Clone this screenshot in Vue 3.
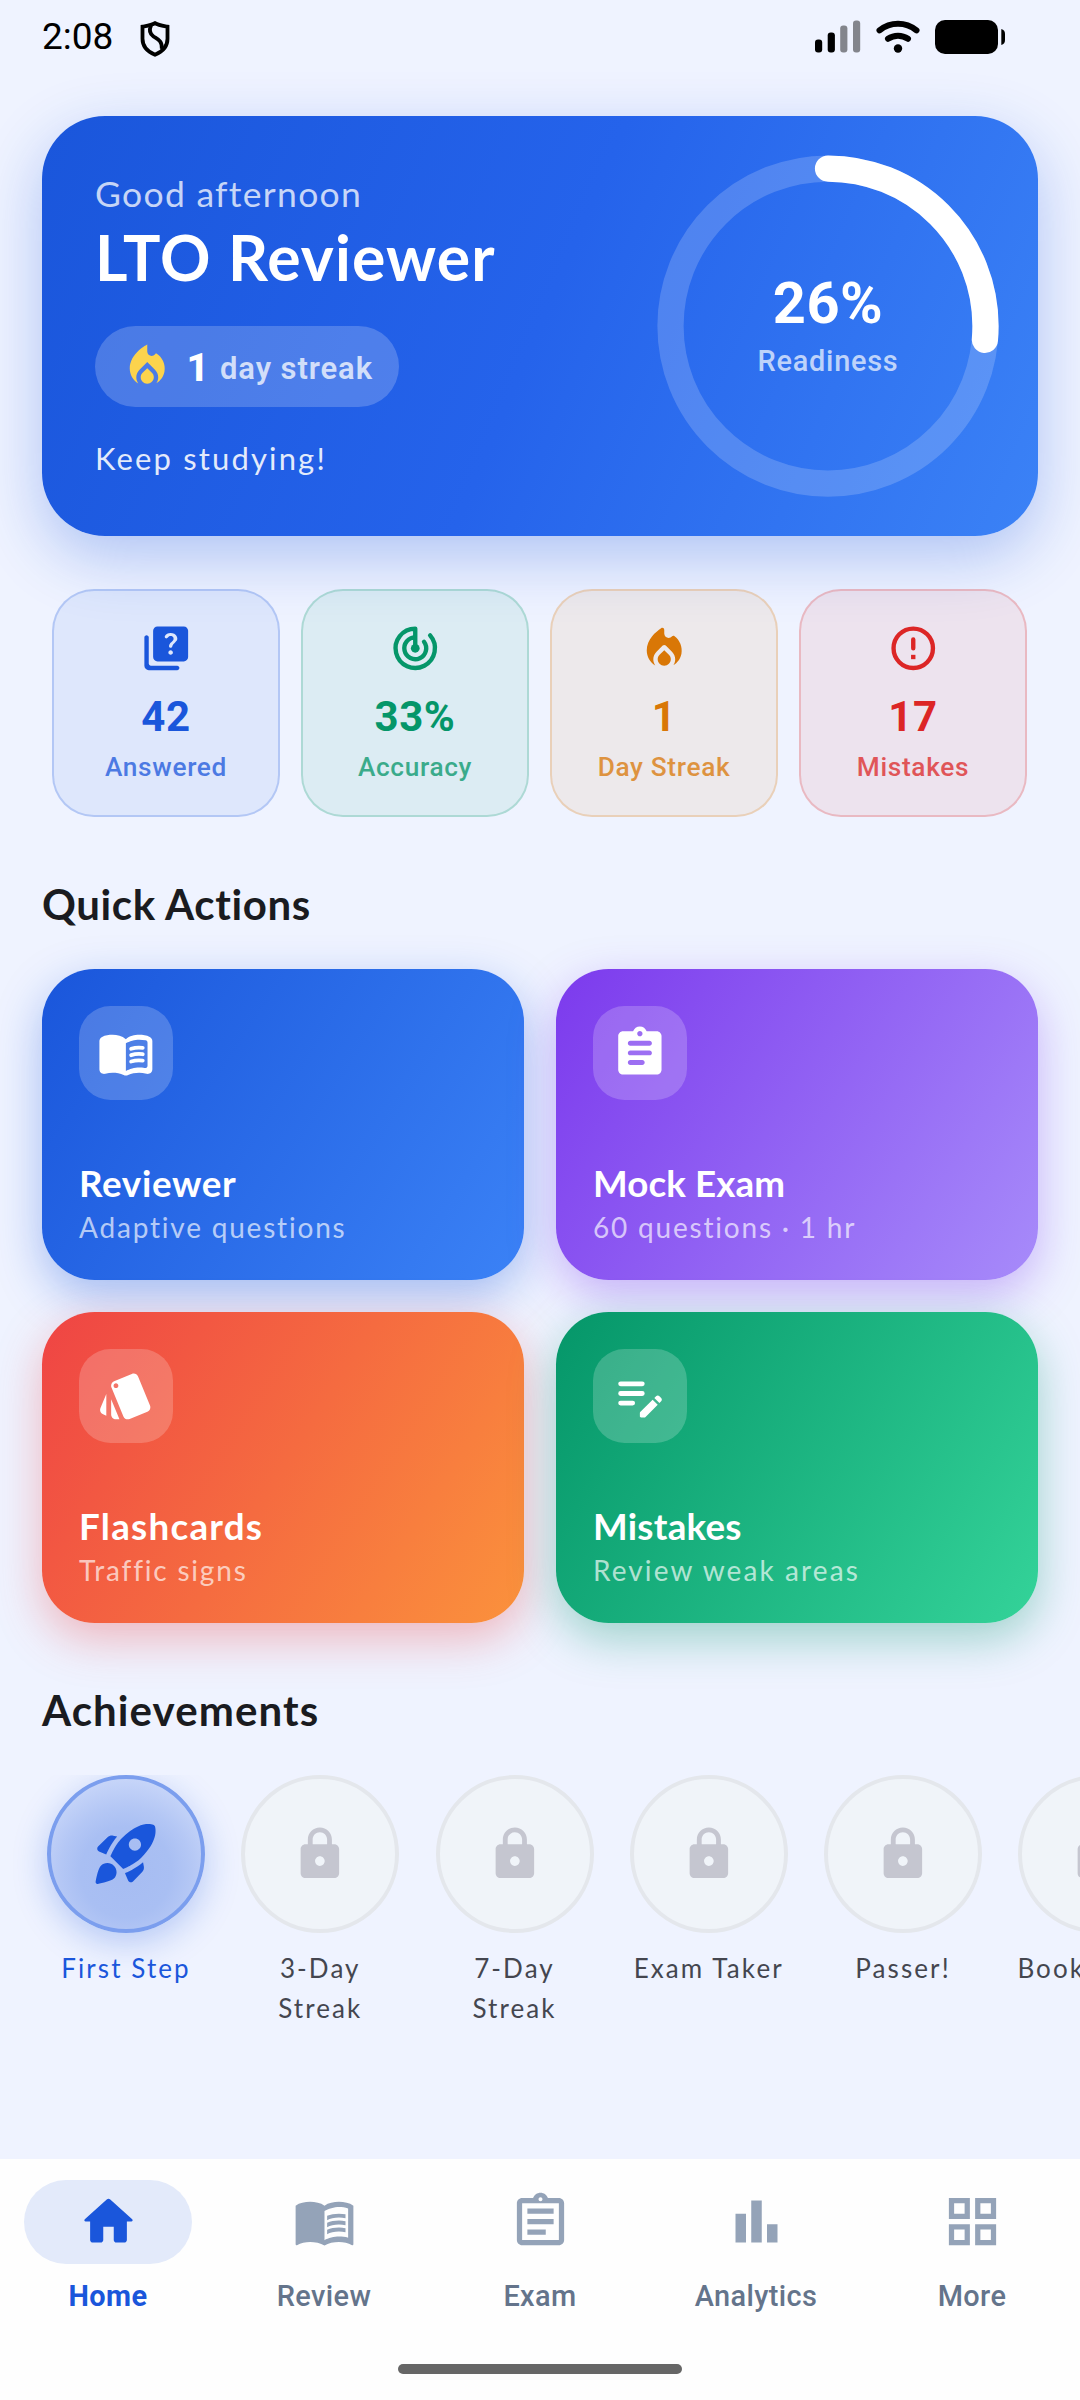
<template>
  <div class="screen">
    <!-- Status bar -->
    <header class="status-bar">
      <div class="status-left">
        <span class="clock">2:08</span>
        <svg class="shield" viewBox="0 0 30 36">
          <path d="M15 2.200c3.600 2.300 7.800 2.700 12.500 3.500v12c0 7.500-5 13-12.500 16C7.500 30.700 2.500 25.200 2.500 17.700v-12C7.200 4.900 11.400 4.500 15 2.200z" />
          <path d="M11 4.500c-2 4.500-1 8.500 2.500 11s9 4 8.300 12.500" />
        </svg>
      </div>
      <div class="status-right">
        <svg class="signal" viewBox="0 0 46 34">
          <rect x="0" y="19.500" width="7.200" height="13" rx="3" />
          <rect x="12.700" y="12.500" width="7.200" height="20" rx="3" />
          <rect x="25.200" y="5.500" width="7.200" height="27" rx="3" opacity="0.45" />
          <rect x="38" y="0.500" width="7.200" height="32" rx="3" opacity="0.45" />
        </svg>
        <svg class="wifi" viewBox="0 0 44 34">
          <path d="M3.500 10.300c11-8.800 26-8.800 37 0" />
          <path d="M12 18.800c6-4.200 14-4.200 20 0" />
          <circle cx="22" cy="28.500" r="4.200" />
        </svg>
        <svg class="battery" viewBox="0 0 71 34">
          <rect x="0" y="0" width="63" height="34" rx="10" />
          <path d="M66.300 9c2.600.6 3.700 2.500 3.700 5v6c0 2.500-1.100 4.400-3.700 5z" />
        </svg>
      </div>
    </header>

    <main class="content">
      <!-- Readiness card -->
      <section class="hero">
        <div class="hero-text">
          <p class="greeting">Good afternoon</p>
          <h1 class="app-name">LTO Reviewer</h1>
          <div class="streak-pill">
            <Glyph class="streak-icon" name="fire" />
            <span class="streak-count">1</span>
            <span class="streak-label">day streak</span>
          </div>
          <p class="hint">Keep studying!</p>
        </div>
        <div class="ring">
          <svg class="ring-svg" viewBox="0 0 342 342">
            <circle class="ring-track" cx="171" cy="171" r="157.500" />
            <circle
              class="ring-value"
              cx="171"
              cy="171"
              r="157.500"
              :stroke-dasharray="`${ringLength * progress} ${ringLength}`"
              transform="rotate(-90 171 171)"
            />
          </svg>
          <div class="ring-text">
            <span class="ring-percent">26%</span>
            <span class="ring-label">Readiness</span>
          </div>
        </div>
      </section>

      <!-- Stats -->
      <section class="stats">
        <div v-for="stat in stats" :key="stat.label" class="stat" :class="stat.tone">
          <Glyph class="stat-icon" :name="stat.icon" />
          <span class="stat-value">{{ stat.value }}</span>
          <span class="stat-label">{{ stat.label }}</span>
        </div>
      </section>

      <h2 class="section-title quick-title">Quick Actions</h2>
      <section class="actions">
        <div v-for="action in actions" :key="action.title" class="action" :class="action.tone">
          <div class="action-tile">
            <Glyph class="action-icon" :name="action.icon" />
          </div>
          <span class="action-title">{{ action.title }}</span>
          <span class="action-subtitle">{{ action.subtitle }}</span>
        </div>
      </section>

      <h2 class="section-title achievements-title">Achievements</h2>
      <section class="badges">
        <div v-for="badge in badges" :key="badge.label" class="badge" :class="{ earned: badge.earned }">
          <div class="badge-circle">
            <Glyph class="badge-icon" :name="badge.earned ? 'rocket' : 'lock'" />
          </div>
          <span class="badge-label">{{ badge.label }}</span>
        </div>
      </section>
    </main>

    <!-- Bottom navigation -->
    <nav class="nav">
      <div class="nav-items">
        <div v-for="tab in tabs" :key="tab.label" class="nav-item" :class="{ active: tab.label === current }">
          <div class="nav-indicator">
            <Glyph class="nav-icon" :name="tab.icon" />
          </div>
          <span class="nav-label">{{ tab.label }}</span>
        </div>
      </div>
      <div class="gesture-bar"></div>
    </nav>
  </div>
</template>

<script setup>
import { ref, h } from 'vue'

// fill: solid shapes, line: 2-unit rounded strokes, thin: 1.6-unit rounded strokes
const icons = {
  fire: {
    fill: 'M12 12.900l-2.130 2.090C9.310 15.550 9 16.280 9 17.060 9 18.680 10.350 20 12 20s3-1.320 3-2.940c0-.78-.31-1.520-.87-2.070L12 12.900zM16 6l-.44.55C14.380 8.020 12 7.190 12 5.300V2S4 6 4 13c0 2.920 1.560 5.470 3.890 6.860-.56-.79-.89-1.760-.89-2.800 0-1.320.52-2.560 1.470-3.500L12 10.100l3.530 3.470c.95.93 1.470 2.170 1.470 3.500 0 1.020-.31 1.960-.85 2.750 1.890-1.150 3.290-3.060 3.710-5.300.66-3.550-1.070-6.900-3.860-8.520z'
  },
  fireRound: {
    fill: 'M12 12.900l-2.130 2.090C9.310 15.550 9 16.280 9 17.060 9 18.680 10.350 20 12 20s3-1.320 3-2.940c0-.78-.31-1.520-.87-2.070L12 12.900zM15.560 6.550C14.380 8.020 12 7.190 12 5.300V3.600c0-.8-.8-1.200-1.440-.75C8.200 4.500 4 7.800 4 13c0 2.920 1.560 5.470 3.890 6.860-.56-.79-.89-1.760-.89-2.800 0-1.320.52-2.560 1.470-3.500l2.830-2.780c.39-.38 1.010-.38 1.400 0l2.830 2.790c.95.93 1.470 2.170 1.470 3.500 0 1.020-.31 1.960-.85 2.750 1.890-1.150 3.290-3.060 3.710-5.300.6-3.230-.8-6.300-3.130-8.050-.38-.28-.87-.27-1.170.08z'
  },
  quiz: {
    fill: 'M3 6c-.55 0-1 .45-1 1v13c0 1.100.9 2 2 2h13c.55 0 1-.45 1-1s-.45-1-1-1H5c-.55 0-1-.45-1-1V7c0-.55-.45-1-1-1zM20 2H8c-1.100 0-2 .9-2 2v12c0 1.100.9 2 2 2h12c1.100 0 2-.9 2-2V4c0-1.100-.9-2-2-2zm-5.990 13c-.59 0-1.050-.47-1.050-1.050 0-.59.47-1.040 1.050-1.040.59 0 1.040.45 1.040 1.040-.01.58-.45 1.050-1.040 1.050zm2.500-6.170c-.63.93-1.230 1.210-1.560 1.810-.08.14-.13.26-.16.49-.05.39-.36.68-.75.68h-.03c-.44 0-.79-.38-.75-.82.03-.28.09-.57.25-.84.41-.73 1.180-1.160 1.630-1.800.48-.68.21-1.940-1.140-1.940-.61 0-1.010.32-1.240.7-.19.34-.59.47-.96.32-.42-.18-.62-.67-.41-1.060C11.850 5.510 12.730 5 13.990 5c1.330 0 2.250.61 2.710 1.370.4.65.63 1.870-.19 2.460z'
  },
  target: {
    fill: 'M12 10a2 2 0 1 0 0 4a2 2 0 1 0 0-4z',
    line: 'M12 12V3a9 9 0 1 0 6.800 3.100M12 7a5 5 0 1 0 4 2'
  },
  alert: {
    fill: 'M11 15h2v2h-2z',
    line: 'M12 3a9 9 0 1 0 0 18a9 9 0 1 0 0-18zM12 8v4'
  },
  reviewer: {
    fill: 'M12 6.300C10.400 4.900 8.400 4.500 6.500 4.500c-1.500 0-3.100.2-4.400.9C1.400 5.800 1 6.400 1 7.100v11.700c0 1.300 1.200 2.200 2.450 1.900C4.450 20.400 5.500 20.300 6.500 20.300c1.560 0 3.200.26 4.560.92.6.3 1.280.3 1.870 0 1.360-.65 3-.92 4.560-.92 1 0 2.050.1 3.050.4 1.250.3 2.460-.6 2.460-1.900V7.100c0-.7-.4-1.400-1.100-1.700-1.300-.7-2.900-.9-4.400-.9-1.900 0-4 .4-5.500 1.800zM21 17.300c0 .6-.58 1.070-1.200.96-.75-.14-1.540-.2-2.300-.2-1.700 0-4.150.65-5.500 1.500V8c1.350-.85 3.800-1.500 5.500-1.500.92 0 1.830.09 2.700.28.46.1.8.51.8.98z',
    thin: 'M14.200 10.300c1.500-.5 3.300-.6 4.800-.4M14.200 12.950c1.500-.5 3.300-.6 4.800-.4M14.200 15.600c1.500-.5 3.300-.6 4.800-.4'
  },
  exam: {
    fill: 'M19 3h-4.180C14.400 1.840 13.300 1 12 1s-2.400.84-2.820 2H5c-1.100 0-2 .9-2 2v14c0 1.100.9 2 2 2h14c1.100 0 2-.9 2-2V5c0-1.100-.9-2-2-2zm-7-.1c.6 0 1.100.5 1.100 1.100s-.5 1.100-1.100 1.100-1.100-.5-1.100-1.100.5-1.100 1.100-1.100zM13 17H8c-.55 0-1-.45-1-1s.45-1 1-1h5c.55 0 1 .45 1 1s-.45 1-1 1zm3-4H8c-.55 0-1-.45-1-1s.45-1 1-1h8c.55 0 1 .45 1 1s-.45 1-1 1zm0-4H8c-.55 0-1-.45-1-1s.45-1 1-1h8c.55 0 1 .45 1 1s-.45 1-1 1z'
  },
  cards: {
    fill: 'M2.530 19.650l1.340.56v-9.030l-2.430 5.860c-.41 1.020.08 2.190 1.090 2.610zm19.500-3.700L17.070 3.980c-.31-.75-1.040-1.210-1.810-1.230-.26 0-.53.04-.79.15L7.100 5.950c-.75.31-1.210 1.030-1.230 1.800-.01.27.04.54.15.8l4.960 11.970c.31.76 1.050 1.220 1.830 1.230.26 0 .52-.05.77-.15l7.360-3.050c1.020-.42 1.510-1.590 1.090-2.600zM7.880 8.750c-.55 0-1-.45-1-1s.45-1 1-1 1 .45 1 1-.45 1-1 1zm-2 11c0 1.100.9 2 2 2h1.450l-3.450-8.340v6.340z'
  },
  note: {
    fill: 'M18.010 12.870l.71-.71c.39-.39 1.020-.39 1.410 0l.71.71c.39.39.39 1.020 0 1.410l-.71.71-2.120-2.120zM17.300 13.580l-5.160 5.160c-.09.09-.14.21-.14.35v1.410c0 .28.22.5.5.5h1.410c.13 0 .26-.05.35-.15l5.160-5.160-2.120-2.110z',
    line: 'M4 7h9M4 11h9M4 15h5'
  },
  rocket: {
    fill: 'M9.190 6.350c-2.040 2.290-3.440 5.580-3.570 5.890L3.270 11.230c-.64-.27-.8-1.100-.31-1.590L6.050 6.640c.47-.47 1.150-.68 1.810-.55l1.330.26zM11.170 17s3.740-1.550 5.890-3.700c5.400-5.400 4.800-9 4.500-10.200-.08-.3-.3-.53-.6-.6-1.200-.3-4.860-.96-10.260 4.440C8.550 9.090 7 12.830 7 12.830L11.170 17zm6.480-2.190c-2.290 2.040-5.580 3.440-5.890 3.570l1.010 2.350c.27.64 1.100.8 1.590.31l3-3.090c.47-.47.68-1.150.55-1.810l-.26-1.330zM9 18c0 .83-.34 1.580-.88 2.120-.85.85-3.800 1.450-5.260 1.730-.41.08-.78-.29-.7-.7.26-1.460.87-4.420 1.720-5.270C4.420 15.340 5.170 15 6 15c1.660 0 3 1.340 3 3zm4-9c0-1.100.9-2 2-2s2 .9 2 2-.9 2-2 2-2-.9-2-2z'
  },
  lock: {
    fill: 'M18 8h-1V6c0-2.760-2.240-5-5-5S7 3.240 7 6v2H6c-1.100 0-2 .9-2 2v10c0 1.100.9 2 2 2h12c1.100 0 2-.9 2-2V10c0-1.100-.9-2-2-2zm-6 9c-1.100 0-2-.9-2-2s.9-2 2-2 2 .9 2 2-.9 2-2 2zM9 8V6c0-1.660 1.340-3 3-3s3 1.340 3 3v2H9z'
  },
  home: {
    fill: 'M10 19v-5h4v5c0 .55.45 1 1 1h3c.55 0 1-.45 1-1v-7h1.700c.46 0 .68-.57.33-.87L12.670 3.600c-.38-.34-.96-.34-1.340 0l-8.360 7.530c-.34.3-.13.87.33.87H5v7c0 .55.45 1 1 1h3c.55 0 1-.45 1-1z'
  },
  book: {
    fill: 'M12 6C10.550 4.900 8.450 4.500 6.500 4.500S2.450 4.900 1 6v14.700c0 .3.300.4.500.3 1.500-.8 3.200-1.200 5-1.200s4 .4 5.500 1.300c1.500-.9 3.500-1.300 5.500-1.300 1.800 0 3.500.4 5 1.200.2.100.5 0 .5-.3V6c-1.450-1.100-3.550-1.500-5.500-1.500S13.450 4.900 12 6zm9 12.200c-1.100-.35-2.300-.45-3.500-.45-1.700 0-4.150.55-5.500 1.400V8c1.350-.85 3.800-1.500 5.500-1.500 1.200 0 2.400.15 3.500.5zM17.500 10.500c.88 0 1.730.09 2.500.26V9.240c-.79-.15-1.640-.24-2.500-.24-1.700 0-3.240.29-4.500.83v1.660c1.130-.64 2.700-.99 4.500-.99zM13 12.490v1.660c1.130-.64 2.700-.99 4.500-.99.88 0 1.730.09 2.500.26V11.900c-.79-.15-1.640-.24-2.500-.24-1.700 0-3.240.3-4.500.83zM17.500 14.330c-1.700 0-3.240.29-4.500.83v1.660c1.130-.64 2.700-.99 4.500-.99.88 0 1.730.09 2.500.26v-1.520c-.79-.16-1.640-.24-2.500-.24z'
  },
  clipboard: {
    fill: 'M7 15h7v2H7zm0-4h10v2H7zm0-4h10v2H7zm12-4h-4.180C14.400 1.840 13.300 1 12 1s-2.400.84-2.820 2H5c-1.100 0-2 .9-2 2v14c0 1.100.9 2 2 2h14c1.100 0 2-.9 2-2V5c0-1.100-.9-2-2-2zm-7-.25c.41 0 .75.34.75.75s-.34.75-.75.75-.75-.34-.75-.75.34-.75.75-.75zM19 19H5V5h14v14z'
  },
  chart: {
    fill: 'M4 9h4v11H4zM10 4h4v16h-4zM16 13h4v7h-4z'
  },
  grid: {
    fill: 'M3 3v8h8V3H3zm6 6H5V5h4v4zm-6 4v8h8v-8H3zm6 6H5v-4h4v4zm4-16v8h8V3h-8zm6 6h-4V5h4v4zm-6 4v8h8v-8h-8zm6 6h-4v-4h4v4z'
  }
}

const strokeAttrs = { fill: 'none', stroke: 'currentColor', 'stroke-linecap': 'round', 'stroke-linejoin': 'round' }

const Glyph = (props) => {
  const icon = icons[props.name]
  return h('svg', { viewBox: '0 0 24 24' }, [
    h('path', { d: icon.fill, fill: 'currentColor', 'fill-rule': 'evenodd' }),
    icon.line && h('path', { d: icon.line, 'stroke-width': 2, ...strokeAttrs }),
    icon.thin && h('path', { d: icon.thin, 'stroke-width': 1.6, ...strokeAttrs })
  ])
}
Glyph.props = ['name']

const progress = ref(0.264)
const ringLength = 2 * Math.PI * 157.5

const stats = ref([
  { icon: 'quiz', value: '42', label: 'Answered', tone: 'blue' },
  { icon: 'target', value: '33%', label: 'Accuracy', tone: 'green' },
  { icon: 'fireRound', value: '1', label: 'Day Streak', tone: 'orange' },
  { icon: 'alert', value: '17', label: 'Mistakes', tone: 'red' }
])

const actions = ref([
  { icon: 'reviewer', title: 'Reviewer', subtitle: 'Adaptive questions', tone: 'ocean' },
  { icon: 'exam', title: 'Mock Exam', subtitle: '60 questions · 1 hr', tone: 'violet' },
  { icon: 'cards', title: 'Flashcards', subtitle: 'Traffic signs', tone: 'sunset' },
  { icon: 'note', title: 'Mistakes', subtitle: 'Review weak areas', tone: 'forest' }
])

const badges = ref([
  { label: 'First Step', earned: true },
  { label: '3-Day Streak' },
  { label: '7-Day Streak' },
  { label: 'Exam Taker' },
  { label: 'Passer!' },
  { label: 'Bookmarker' }
])

const current = ref('Home')
const tabs = [
  { icon: 'home', label: 'Home' },
  { icon: 'book', label: 'Review' },
  { icon: 'clipboard', label: 'Exam' },
  { icon: 'chart', label: 'Analytics' },
  { icon: 'grid', label: 'More' }
]
</script>

<style>
body {
  margin: 0;
  background: #eff3ff;
}
</style>

<style scoped>
.screen {
  width: 1080px;
  height: 2400px;
  display: flex;
  flex-direction: column;
  overflow: hidden;
  background: #eff3ff;
  font-family: Lato, "Open Sans", sans-serif;
  font-variant-ligatures: none;
}

svg {
  display: block;
  flex: none;
}

p, h1, h2 {
  margin: 0;
}

.status-bar {
  height: 74px;
  flex: none;
  box-sizing: border-box;
  padding: 0 74px 0 42px;
  display: flex;
  align-items: center;
  justify-content: space-between;
  color: #000;
}

.status-left, .status-right {
  display: flex;
  align-items: center;
}

.clock {
  width: 98px;
  font: 400 37px/42px Roboto, sans-serif;
}

.shield {
  width: 30px;
  height: 36px;
  margin-top: 3px;
  fill: none;
  stroke: #000;
  stroke-width: 3.8;
}

.signal {
  width: 46px;
  height: 34px;
}

.wifi {
  width: 44px;
  height: 34px;
  margin-left: 15px;
}

.wifi path {
  fill: none;
  stroke: #000;
  stroke-width: 6;
  stroke-linecap: round;
}

.battery {
  width: 71px;
  height: 34px;
  margin-left: 15px;
}

.content {
  flex: none;
  height: 2085px;
  padding-top: 42px;
  box-sizing: border-box;
}

.hero {
  height: 420px;
  margin: 0 42px;
  padding: 0 39px 0 53px;
  box-sizing: border-box;
  display: flex;
  justify-content: space-between;
  align-items: center;
  border-radius: 63px;
  background: linear-gradient(112.87deg, #1a56db, #2563eb 50%, #3b82f6);
  box-shadow: 0 21px 62px rgba(26, 86, 219, 0.3);
  color: #fff;
}

.hero-text {
  align-self: flex-start;
  padding-top: 52px;
  display: flex;
  flex-direction: column;
  align-items: flex-start;
  white-space: nowrap;
}

.greeting {
  font-size: 35.5px;
  line-height: 52px;
  font-weight: 400;
  letter-spacing: 1.3px;
  color: rgba(255, 255, 255, 0.75);
}

.app-name {
  font-size: 62.5px;
  line-height: 74px;
  font-weight: 700;
  letter-spacing: 1.1px;
}

.streak-pill {
  height: 81px;
  width: 304px;
  margin-top: 32px;
  padding-left: 26px;
  box-sizing: border-box;
  display: flex;
  align-items: center;
  border-radius: 41px;
  background: rgba(255, 255, 255, 0.2);
  font-family: Roboto, sans-serif;
}

.streak-icon {
  width: 52.5px;
  height: 52.5px;
  color: #fcd34d;
}

.streak-count {
  margin-left: 13px;
  font-size: 39px;
  line-height: 46px;
  margin-top: 2px;
  font-weight: 800;
}

.streak-label {
  margin-left: 11px;
  margin-top: 3px;
  font-size: 31px;
  font-weight: 600;
  letter-spacing: 0.9px;
  color: rgba(255, 255, 255, 0.75);
}

.hint {
  margin-top: 27px;
  font-size: 31px;
  line-height: 48px;
  letter-spacing: 2.150px;
  color: rgba(255, 255, 255, 0.88);
}

.ring {
  width: 342px;
  height: 342px;
  display: grid;
  place-items: center;
  font-family: Roboto, sans-serif;
}

.ring-svg, .ring-text {
  grid-area: 1 / 1;
}

.ring-svg {
  width: 342px;
  height: 342px;
}

.ring-track, .ring-value {
  fill: none;
  stroke-width: 26.25;
}

.ring-track {
  stroke: rgba(255, 255, 255, 0.18);
}

.ring-value {
  stroke: #fff;
  stroke-linecap: round;
}

.ring-text {
  display: flex;
  flex-direction: column;
  align-items: center;
}

.ring-percent {
  font-size: 57.75px;
  line-height: 66px;
  font-weight: 700;
  letter-spacing: 0.5px;
}

.ring-label {
  font-size: 28.9px;
  line-height: 42px;
  margin-top: 4px;
  font-weight: 500;
  letter-spacing: 0.75px;
  color: rgba(255, 255, 255, 0.7);
}

.stats {
  margin: 53px 53px 0 52px;
  display: grid;
  grid-template-columns: repeat(4, 1fr);
  gap: 21px;
  font-family: Roboto, sans-serif;
}

.stat {
  height: 228px;
  box-sizing: border-box;
  padding-top: 31px;
  display: flex;
  flex-direction: column;
  align-items: center;
  border: 2px solid;
  border-radius: 42px;
}

.stat.blue {
  color: #1a56db;
  background: rgba(26, 86, 219, 0.08);
  border-color: rgba(26, 86, 219, 0.22);
}

.stat.green {
  color: #059669;
  background: rgba(5, 150, 105, 0.08);
  border-color: rgba(5, 150, 105, 0.22);
}

.stat.orange {
  color: #d97706;
  background: rgba(217, 119, 6, 0.08);
  border-color: rgba(217, 119, 6, 0.22);
}

.stat.red {
  color: #dc2626;
  background: rgba(220, 38, 38, 0.08);
  border-color: rgba(220, 38, 38, 0.22);
}

.stat-icon {
  width: 52.5px;
  height: 52.5px;
}

.stat-value {
  margin-top: 16px;
  font-size: 42px;
  line-height: 52px;
  font-weight: 700;
  letter-spacing: 0.6px;
}

.stat-label {
  margin-top: 5px;
  font-size: 26.25px;
  line-height: 38px;
  font-weight: 500;
  letter-spacing: 0.65px;
  opacity: 0.75;
}

.section-title {
  margin: 0 42px;
  font-size: 42px;
  line-height: 60px;
  font-weight: 700;
  color: #1a1b20;
}

.quick-title {
  margin-top: 57px;
  letter-spacing: 0.6px;
}

.actions {
  margin: 35px 42px 0;
  display: grid;
  grid-template-columns: 1fr 1fr;
  gap: 32px;
}

.action {
  height: 311px;
  box-sizing: border-box;
  padding: 37px;
  display: flex;
  flex-direction: column;
  align-items: flex-start;
  border-radius: 52.5px;
  color: #fff;
}

.action.ocean {
  background: linear-gradient(122.8deg, #1a56db, #3b82f6);
  box-shadow: 0 16px 46px rgba(26, 86, 219, 0.35);
}

.action.violet {
  background: linear-gradient(122.8deg, #7c3aed, #a78bfa);
  box-shadow: 0 16px 46px rgba(124, 58, 237, 0.35);
}

.action.sunset {
  background: linear-gradient(122.8deg, #ef4444, #fb923c);
  box-shadow: 0 16px 46px rgba(239, 68, 68, 0.35);
}

.action.forest {
  background: linear-gradient(122.8deg, #059669, #34d399);
  box-shadow: 0 16px 46px rgba(5, 150, 105, 0.35);
}

.action-tile {
  flex: none;
  width: 94px;
  height: 94px;
  display: grid;
  place-items: center;
  border-radius: 31.5px;
  background: rgba(255, 255, 255, 0.2);
}

.action-icon {
  width: 57.75px;
  height: 57.75px;
}

.action-title {
  margin-top: 59px;
  font-size: 36.75px;
  line-height: 48px;
  font-weight: 700;
}

.ocean .action-title {
  letter-spacing: 0.65px;
}

.violet .action-title {
  letter-spacing: 0.1px;
}

.sunset .action-title {
  letter-spacing: 1.250px;
}

.forest .action-title {
  letter-spacing: 0.25px;
}

.action-subtitle {
  font-size: 28px;
  line-height: 40px;
  font-weight: 400;
  letter-spacing: 1.8px;
  color: rgba(255, 255, 255, 0.68);
}

.forest .action-subtitle {
  letter-spacing: 2.1px;
}

.achievements-title {
  margin-top: 57px;
  letter-spacing: 1.1px;
}

.badges {
  margin-top: 35px;
  padding-left: 42px;
  height: 270px;
  display: flex;
  gap: 26.25px;
  overflow: hidden;
}

.badge {
  width: 168px;
  flex: none;
  display: flex;
  flex-direction: column;
  align-items: center;
}

.badge-circle {
  width: 158px;
  height: 158px;
  box-sizing: border-box;
  display: grid;
  place-items: center;
  border: 4px solid #e4e7ec;
  border-radius: 50%;
  background: #f0f4f9;
  color: #c5c6d0;
}

.badge-icon {
  width: 57.75px;
  height: 57.75px;
}

.badge-label {
  max-width: 160px;
  margin-top: 15px;
  font-size: 26px;
  line-height: 40px;
  letter-spacing: 2.1px;
  text-align: center;
  color: #44464f;
}

.earned .badge-circle {
  border-color: #7b9eee;
  background: radial-gradient(circle at 50% 62%, #a6bcf2 0, #a9bff3 38%, #b4c7f5 55%, #c8d6f9 80%);
  box-shadow: 0 10px 34px rgba(26, 86, 219, 0.27);
  color: #1a56db;
}

.earned .badge-icon {
  width: 73.5px;
  height: 73.5px;
}

.earned .badge-label {
  color: #1a56db;
}

.nav {
  flex: none;
  height: 241px;
  box-sizing: border-box;
  padding-top: 21px;
  display: flex;
  flex-direction: column;
  align-items: center;
  background: #fefefe;
  font-family: Roboto, sans-serif;
}

.nav-items {
  width: 100%;
  display: flex;
}

.nav-item {
  flex: 1;
  display: flex;
  flex-direction: column;
  align-items: center;
  color: #94a3b8;
}

.nav-indicator {
  width: 168px;
  height: 84px;
  box-sizing: border-box;
  padding-bottom: 1px;
  display: grid;
  place-items: center;
  border-radius: 42px;
}

.nav-icon {
  width: 63px;
  height: 63px;
}

.nav-label {
  margin-top: 11px;
  font-size: 28.9px;
  line-height: 42px;
  font-weight: 500;
  letter-spacing: 0.4px;
  color: #64748b;
}

.nav-item.active {
  color: #1a56db;
}

.active .nav-indicator {
  background: #e3eafa;
}

.active .nav-label {
  color: #1a56db;
  font-weight: 700;
}

.gesture-bar {
  width: 284px;
  height: 10px;
  margin-top: 47px;
  border-radius: 5px;
  background: #666;
}
</style>
